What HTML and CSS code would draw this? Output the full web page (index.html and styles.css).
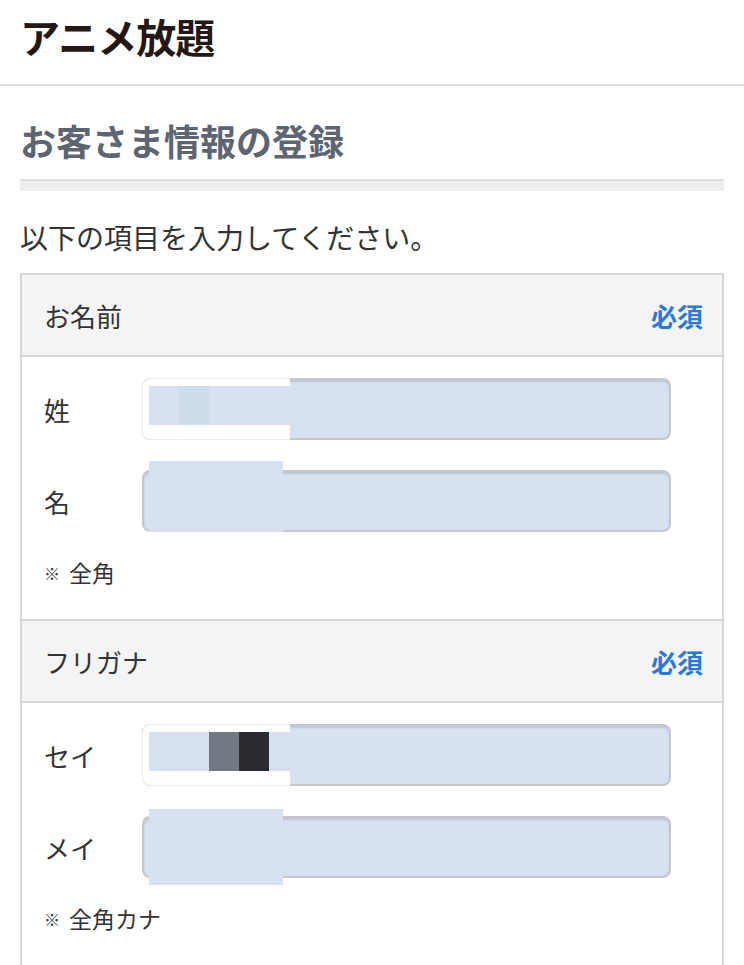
FILE: index.html
```html
<!DOCTYPE html>
<html lang="ja">
<head>
    <meta charset="UTF-8">
    <meta name="viewport" content="width=device-width, initial-scale=1.0">
    <title>お客さま情報の登録 | アニメ放題</title>
    <link rel="stylesheet" href="styles.css">
</head>
<body>
    <header class="site-header">
        <h1 class="logo">アニメ放題</h1>
    </header>

    <main class="page">
        <h2 class="page-title">お客さま情報の登録</h2>
        <div class="title-bar"></div>

        <p class="lead">以下の項目を入力してください。</p>

        <div class="form-box">
            <!-- お名前 -->
            <section class="form-section">
                <div class="section-head">
                    <span class="section-name">お名前</span>
                    <span class="required">必須</span>
                </div>
                <div class="section-body">
                    <div class="field">
                        <label class="field-label" for="sei">姓</label>
                        <div class="input-wrap">
                            <input class="text-input" id="sei" type="text">
                            <!-- モザイク -->
                            <span class="mask mask-patch">
                                <span class="mosaic">
                                    <span class="cell"></span>
                                    <span class="cell cell-pale"></span>
                                </span>
                            </span>
                        </div>
                    </div>
                    <div class="field">
                        <label class="field-label" for="mei">名</label>
                        <div class="input-wrap">
                            <input class="text-input" id="mei" type="text">
                            <span class="mask mask-block"></span>
                        </div>
                    </div>
                    <p class="note"><span class="kome">※</span>全角</p>
                </div>
            </section>

            <!-- フリガナ -->
            <section class="form-section">
                <div class="section-head">
                    <span class="section-name">フリガナ</span>
                    <span class="required">必須</span>
                </div>
                <div class="section-body">
                    <div class="field">
                        <label class="field-label" for="sei-kana">セイ</label>
                        <div class="input-wrap">
                            <input class="text-input" id="sei-kana" type="text">
                            <span class="mask mask-patch">
                                <span class="mosaic">
                                    <span class="cell"></span>
                                    <span class="cell"></span>
                                    <span class="cell cell-gray"></span>
                                    <span class="cell cell-dark"></span>
                                </span>
                            </span>
                        </div>
                    </div>
                    <div class="field">
                        <label class="field-label" for="mei-kana">メイ</label>
                        <div class="input-wrap">
                            <input class="text-input" id="mei-kana" type="text">
                            <span class="mask mask-block mask-tall"></span>
                        </div>
                    </div>
                    <p class="note"><span class="kome">※</span>全角カナ</p>
                </div>
            </section>
        </div>
    </main>
</body>
</html>
```

FILE: styles.css
```css
body {
    margin: 0;
    background-color: #fff;
    color: #333;
    font-family: "Noto Sans CJK JP", "Noto Sans", sans-serif;
}

/* ヘッダー */
.site-header {
    height: 86px;
    padding: 12px 20px 0;
    box-sizing: border-box;
    border-bottom: 2px solid #dcdcdc;
}

.logo {
    margin: 0;
    font-size: 40px;
    line-height: 48px;
    font-weight: 700;
    color: #231815;
    letter-spacing: -1px;
}

.page {
    padding: 0 20px;
}

.page-title {
    margin: 34px 0 0;
    font-size: 36px;
    line-height: 40px;
    font-weight: 700;
    color: #5e6572;
}

.title-bar {
    margin-top: 19px;
    height: 10px;
    background-color: #eeeeee;
    border-top: 2px solid #dedede;
}

.lead {
    margin: 30px 0 20px;
    font-size: 28px;
    line-height: 32px;
    color: #333;
}

/* フォーム */
.form-box {
    border: 2px solid #d6d6d6;
    border-bottom: none;
}

.form-section + .form-section {
    border-top: 2px solid #d6d6d6;
}

.section-head {
    display: flex;
    justify-content: space-between;
    align-items: center;
    height: 80px;
    padding: 0 19px 0 22px;
    background-color: #f4f4f4;
    border-bottom: 2px solid #d6d6d6;
}

.section-name {
    font-size: 26px;
    color: #333;
}

.required {
    font-size: 26px;
    font-weight: 700;
    color: #2b79d7;
}

.section-body {
    padding: 21px 51px 31px 22px;
}

.field {
    display: flex;
    align-items: center;
}

.field + .field {
    margin-top: 30px;
}

.field-label {
    width: 98px;
    flex-shrink: 0;
    font-size: 26px;
    color: #333;
}

.input-wrap {
    position: relative;
    flex: 1;
}

.text-input {
    display: block;
    width: 100%;
    height: 62px;
    box-sizing: border-box;
    margin: 0;
    border: 2px solid #c4c7cc;
    border-radius: 8px;
    background-color: #d7e1f2;
    box-shadow: inset 0 2px 2px rgba(0, 0, 0, 0.12);
    font-size: 24px;
    font-family: inherit;
}

/* 伏せ字 */
.mask {
    position: absolute;
    pointer-events: none;
}

.mask-patch {
    left: 0;
    top: 0;
    bottom: 0;
    width: 148px;
    background-color: #fff;
    border: 1px solid #ececec;
    border-right: none;
    border-radius: 8px 0 0 8px;
    box-sizing: border-box;
}

.mosaic {
    position: absolute;
    left: 6px;
    top: 7px;
    width: 142px;
    height: 39px;
    display: flex;
    background-color: #d7e1f2;
}

.cell {
    width: 30px;
    height: 100%;
}

.cell-pale {
    background-color: #cfdcea;
}

.cell-gray {
    background-color: #737982;
}

.cell-dark {
    background-color: #2a2b30;
}

.mask-block {
    left: 7px;
    top: -9px;
    bottom: 0;
    width: 134px;
    background-color: #d7e1f2;
}

.mask-tall {
    top: -7px;
    bottom: -7px;
}

.note {
    margin: 25px 0 0;
    font-size: 23px;
    line-height: 30px;
    color: #333;
}

.kome {
    font-size: 16px;
    font-weight: 700;
    margin-right: 9px;
    vertical-align: 2px;
}
```
